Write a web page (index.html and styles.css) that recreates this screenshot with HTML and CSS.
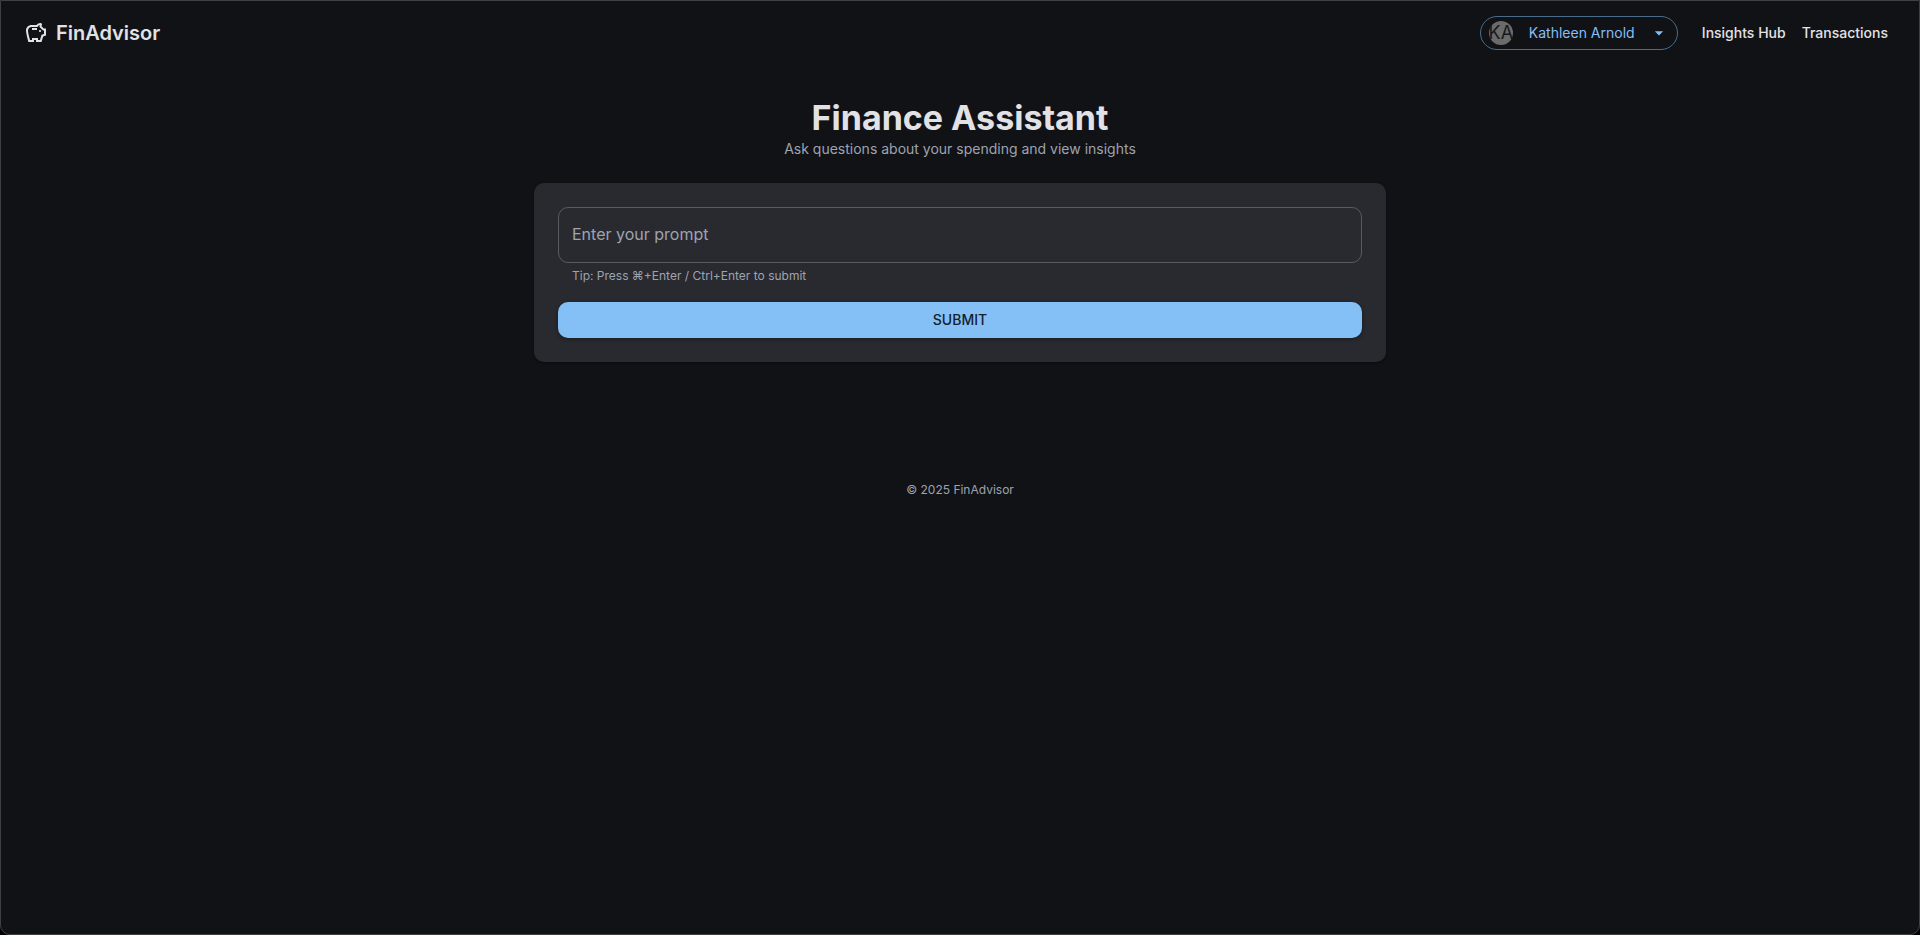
FILE: index.html
```html
<!DOCTYPE html>
<html lang="en">
<head>
<meta charset="utf-8">
<meta name="viewport" content="width=device-width, initial-scale=1">
<title>FinAdvisor</title>
<link rel="stylesheet" href="styles.css">
</head>
<body>
<div class="app">
  <header class="toolbar">
    <a class="brand" href="#">
      <svg class="brand-icon" viewBox="0 0 24 24" aria-hidden="true"><path d="M15 10c0-.55.45-1 1-1s1 .45 1 1-.45 1-1 1-1-.45-1-1zM8 9h5V7H8v2zm14-1.5v6.97l-2.82.94L17.5 21H12v-2h-2v2H4.5S2 12.54 2 9.5 4.46 4 7.5 4h5c.91-1.21 2.36-2 4-2 .83 0 1.5.67 1.5 1.5 0 .21-.04.4-.12.58-.14.34-.26.73-.32 1.15l2.27 2.27H22zm-2 2h-1L15.5 6c0-.65.09-1.29.26-1.91-.97.25-1.76.97-2.09 1.91H7.5C5.57 6 4 7.57 4 9.5c0 1.88 1.22 6.65 2.01 9.5H8v-2h6v2h2.01l1.55-5.15 2.44-.82V9.5z"/></svg>
      <span>FinAdvisor</span>
    </a>
    <div class="account">
      <span class="avatar" aria-hidden="true">KA</span>
      <select class="account-select" aria-label="Account">
        <option>Kathleen Arnold</option>
      </select>
      <svg class="account-arrow" viewBox="0 0 24 24" aria-hidden="true"><path d="m7 10 5 5 5-5z"/></svg>
    </div>
    <nav class="nav">
      <a class="nav-link" href="#insights">Insights Hub</a>
      <a class="nav-link" href="#transactions">Transactions</a>
    </nav>
  </header>
  <main class="content">
    <div class="intro">
      <h1 class="title">Finance Assistant</h1>
      <p class="subtitle">Ask questions about your spending and view insights</p>
    </div>
    <form class="card">
      <div class="field">
        <textarea class="field-input" id="prompt" rows="1" placeholder=" " aria-describedby="prompt-tip"></textarea>
        <label class="field-label" for="prompt">Enter your prompt</label>
      </div>
      <p class="field-tip" id="prompt-tip">Tip: Press ⌘+Enter / Ctrl+Enter to submit</p>
      <button class="submit" type="button">SUBMIT</button>
    </form>
  </main>
  <footer class="footer">© 2025 FinAdvisor</footer>
</div>
</body>
</html>
```
FILE: styles.css
```css
* { box-sizing: border-box; }

html { background: #000; }

body {
  margin: 0;
  color: #e2e2e6;
  font-family: Inter, Roboto, "Liberation Sans", sans-serif;
}

.app {
  position: relative;
  min-height: 100vh;
  background: #111216;
  border-radius: 0 0 10px 10px;
}

.app::after {
  content: "";
  position: absolute;
  inset: 0;
  border: 1px solid #3f4042;
  border-radius: inherit;
  pointer-events: none;
}

.toolbar {
  display: flex;
  align-items: center;
  min-height: 66px;
  padding: 0 24px;
}

.brand {
  display: flex;
  align-items: center;
  gap: 8px;
  margin-right: auto;
  color: inherit;
  font-size: 20px;
  font-weight: 600;
  line-height: 32px;
  text-decoration: none;
}

.brand-icon {
  width: 24px;
  height: 24px;
  fill: currentColor;
}

.account {
  display: flex;
  align-items: center;
  height: 34px;
  margin-right: 16px;
  padding: 0 8px;
  border: 1px solid #4a6c8b;
  border-radius: 17px;
}

.avatar {
  display: flex;
  align-items: center;
  justify-content: center;
  width: 24px;
  height: 24px;
  border-radius: 50%;
  background: #6b6b6b;
  color: #17181b;
  font-size: 18px;
  line-height: 24px;
}

.account-select {
  appearance: none;
  height: 32px;
  margin-right: -24px;
  padding: 0 38px 0 16px;
  border: 0;
  background: transparent;
  color: #84bff6;
  font: 400 14px/20px Inter, Roboto, sans-serif;
}

.account-arrow {
  width: 20px;
  height: 20px;
  fill: #84bff6;
  pointer-events: none;
}

.nav { display: flex; }

.nav-link {
  padding: 6px 8px;
  color: inherit;
  font-size: 14px;
  font-weight: 500;
  line-height: 24px;
  text-decoration: none;
}

.content {
  max-width: 900px;
  margin: 0 auto;
  padding: 32px 24px;
}

.intro {
  margin-bottom: 23px;
  text-align: center;
}

.title {
  margin: 0;
  font-size: 34px;
  font-weight: 700;
  line-height: 40px;
}

.subtitle {
  margin: 0;
  color: #9ea3b0;
  font-size: 14px;
  line-height: 22px;
}

.card {
  padding: 24px;
  border-radius: 10px;
  background: #292a2f;
  box-shadow: 0 1px 3px rgba(0, 0, 0, .4);
}

.field { position: relative; }

.field-input {
  display: block;
  width: 100%;
  height: 56px;
  padding: 16px 14px;
  border: 1px solid #5a5b5f;
  border-radius: 10px;
  outline: 0;
  background: transparent;
  color: inherit;
  font: 400 16px/24px Inter, Roboto, sans-serif;
  resize: none;
}

.field-label {
  position: absolute;
  top: 15px;
  left: 14px;
  color: #9ea3b0;
  font-size: 16px;
  line-height: 24px;
  pointer-events: none;
}

.field-input:focus + .field-label,
.field-input:not(:placeholder-shown) + .field-label { opacity: 0; }

.field-tip {
  margin: 3px 14px 16px;
  color: #9ea3b0;
  font-size: 12px;
  line-height: 20px;
}

.submit {
  display: block;
  width: 100%;
  height: 36px;
  border: 0;
  border-radius: 10px;
  background: #84bff6;
  box-shadow: 0 1px 4px rgba(0, 0, 0, .4);
  color: #14212d;
  font: 500 14px/24px Inter, Roboto, sans-serif;
}

.footer {
  padding: 86px 24px 32px;
  color: #9ea3b0;
  font-size: 12px;
  line-height: 20px;
  text-align: center;
}
```
